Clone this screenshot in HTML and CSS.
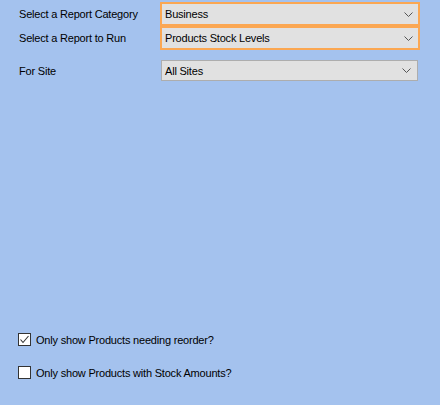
FILE: index.html
```html
<!DOCTYPE html>
<html>
<head>
<meta charset="utf-8">
<link rel="stylesheet" href="styles.css">
</head>
<body>
<div class="form">
  <div class="row">
    <span class="label">Select a Report Category</span>
    <div class="combo hl"><span class="value">Business</span><svg class="chev" width="9" height="5" viewBox="0 0 9 5"><path d="M0.5 0.5 L4.5 4.5 L8.5 0.5" fill="none" stroke="#555" stroke-width="1"/></svg></div>
  </div>
  <div class="row">
    <span class="label">Select a Report to Run</span>
    <div class="combo hl"><span class="value">Products Stock Levels</span><svg class="chev" width="9" height="5" viewBox="0 0 9 5"><path d="M0.5 0.5 L4.5 4.5 L8.5 0.5" fill="none" stroke="#555" stroke-width="1"/></svg></div>
  </div>
  <div class="row row-site">
    <span class="label">For Site</span>
    <div class="combo plain"><span class="value">All Sites</span><svg class="chev" width="9" height="5" viewBox="0 0 9 5"><path d="M0.5 0.5 L4.5 4.5 L8.5 0.5" fill="none" stroke="#555" stroke-width="1"/></svg></div>
  </div>
  <div class="checks">
    <label class="check"><span class="box"><svg width="11" height="11" viewBox="0 0 11 11"><path d="M1.5 5.5 L4 8.5 L9.5 2" fill="none" stroke="#333" stroke-width="1.1"/></svg></span><span class="ctext">Only show Products needing reorder?</span></label>
    <label class="check"><span class="box"></span><span class="ctext">Only show Products with Stock Amounts?</span></label>
  </div>
</div>
</body>
</html>
```
FILE: styles.css
```css
html, body {
  margin: 0;
  padding: 0;
  height: 100%;
}
body {
  background: #a4c2ee;
  font-family: "Liberation Sans", Arial, sans-serif;
  font-size: 11px;
  letter-spacing: -0.2px;
  color: #000;
}
.form {
  display: flex;
  flex-direction: column;
  height: 405px;
  box-sizing: border-box;
  padding: 2px 20px 26px 19px;
}
.row {
  display: flex;
  align-items: center;
}
.label {
  width: 141px;
  flex: none;
}
.combo {
  flex: 1;
  display: flex;
  align-items: center;
  justify-content: space-between;
  background: #e1e1e1;
  box-sizing: border-box;
}
.hl {
  border: 2px solid #fba752;
  height: 24px;
  padding: 0 5px 0 3px;
}
.plain {
  border: 1px solid #adadad;
  height: 21px;
  margin: 0 2px 0 1px;
  padding: 0 6px 0 3px;
}
.row-site {
  margin-top: 10px;
}
.label, .value {
  white-space: nowrap;
}
.chev {
  display: block;
}
.checks {
  margin-top: auto;
  display: flex;
  flex-direction: column;
  gap: 20px;
}
.check {
  display: flex;
  align-items: center;
  gap: 5px;
  margin-left: -1px;
}
.box {
  width: 13px;
  height: 13px;
  box-sizing: border-box;
  border: 1px solid #333;
  background: #fff;
  display: flex;
  align-items: center;
  justify-content: center;
}
.box svg {
  display: block;
}
```
